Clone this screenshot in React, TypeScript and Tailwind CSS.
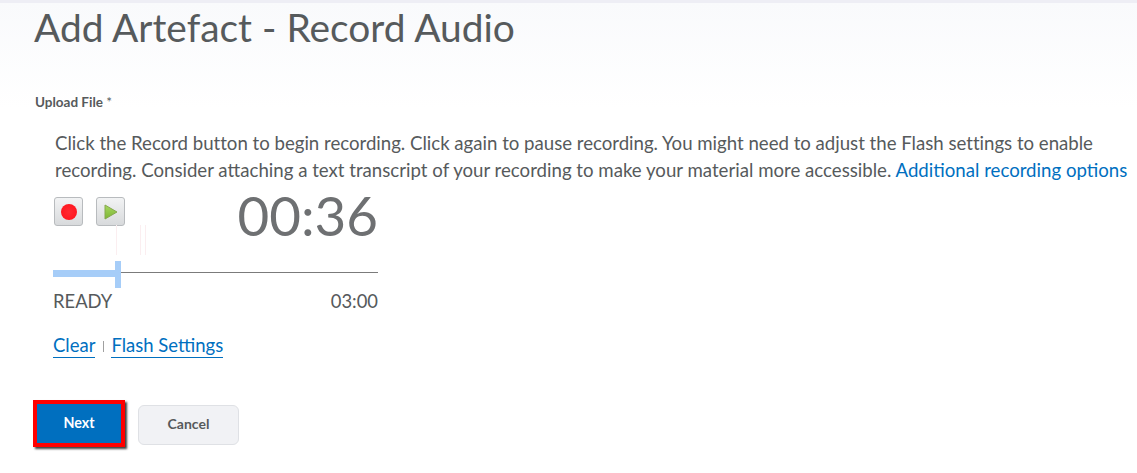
export default function App() {
  return (
    <div className="h-[473px] w-[1137px] overflow-hidden bg-white font-['Lato',sans-serif] text-[#565a5c]">
      <header className="h-[109px] border-t-[3px] border-[#eeeef5] bg-gradient-to-b from-[#f9fafc] to-white pl-[34px]">
        <h1 className="pt-[1px] text-[38.9px] leading-[46px] font-normal">Add Artefact - Record Audio</h1>
      </header>

      <div className="-mt-[15px] pl-[35px] text-[13.5px] leading-[16px] font-bold">
        Upload File <span className="font-normal">*</span>
      </div>

      <main className="pt-[20px] pl-[55px]">
        <p className="w-[1082px] text-[18.65px] leading-[27px] whitespace-nowrap">
          <span className="tracking-[-0.015px]">
            Click the Record button to begin recording. Click again to pause recording. You might need to adjust the Flash settings to enable
          </span>
          <br />
          recording. Consider attaching a text transcript of your recording to make your material more accessible.{' '}
          <a className="text-[#006fbf]">Additional recording options</a>
        </p>

        <section className="relative -ml-[2px] w-[325px]">
          <div className="flex h-[77px] items-start justify-between">
            <div className="flex gap-[13px] pt-[13px] pl-[1px]">
              <button className="flex h-[29px] w-[29px] items-center justify-center rounded-[3px] border border-[#b8bbbe] bg-gradient-to-b from-[#f2f3f4] to-[#d8dadc]">
                <span className="h-[16px] w-[16px] rounded-full bg-[radial-gradient(circle,#ff2a32,#ff1019)]" />
              </button>
              <button className="flex h-[29px] w-[29px] items-center justify-center rounded-[3px] border border-[#b8bbbe] bg-gradient-to-b from-[#f2f3f4] to-[#d8dadc]">
                <svg width="14" height="16" viewBox="0 0 14 16">
                  <defs>
                    <linearGradient id="playFill" x1="0" y1="0" x2="0" y2="1">
                      <stop offset="0" stopColor="#a6d860" />
                      <stop offset="1" stopColor="#7db534" />
                    </linearGradient>
                  </defs>
                  <path d="M1 1 L13 8 L1 15 Z" fill="url(#playFill)" stroke="#86a84e" strokeWidth="1" strokeLinejoin="round" />
                </svg>
              </button>
            </div>
            <span className="mt-[2px] text-[54.7px] leading-[58px] text-[#6e7072]">00:36</span>
          </div>

          {/* faint level marks left by the recorder */}
          <svg className="absolute top-[41px] left-[63px]" width="32" height="30" viewBox="0 0 32 30">
            <path d="M0.5 0V30M24.5 0V30M29.5 0V30" stroke="#fbeef0" strokeWidth="1" />
          </svg>

          <div className="flex h-[27px] items-center">
            <div className="-mt-[2px] h-[7px] w-[62px] bg-[#a6cdf8]" />
            <div className="h-[27px] w-[6px] bg-[#a6cdf8]" />
            <div className="-mt-[4px] h-px flex-1 bg-[#7b7b7b]" />
          </div>

          <div className="flex justify-between pt-[1px] text-[18.4px] leading-[24px]">
            <span>READY</span>
            <span>03:00</span>
          </div>

          <div className="flex items-center pt-[21px] text-[18.5px] leading-[24px] text-[#006fbf]">
            <a className="border-b border-[#006fbf] leading-[23px]">Clear</a>
            <span className="mr-[7px] ml-[8px] h-[11px] w-px bg-[#a0a0a0]" />
            <a className="border-b border-[#006fbf] leading-[23px]">Flash Settings</a>
          </div>
        </section>
      </main>

      <footer className="flex items-center gap-[13px] pt-[42px] pl-[33px]">
        <button className="h-[47px] w-[92px] border-[4px] border-[#ff0000] bg-[#006fbf] pb-[1px] text-[14.3px] font-bold text-white shadow-[2px_2px_2px_0_rgba(0,0,0,0.75)]">
          Next
        </button>
        <button className="mt-[2px] h-[40px] w-[101px] rounded-[6px] border border-[#dfe1e5] bg-[#f1f2f5] pb-[3px] text-[14px] font-bold text-[#565a5c]">
          Cancel
        </button>
      </footer>
    </div>
  );
}
